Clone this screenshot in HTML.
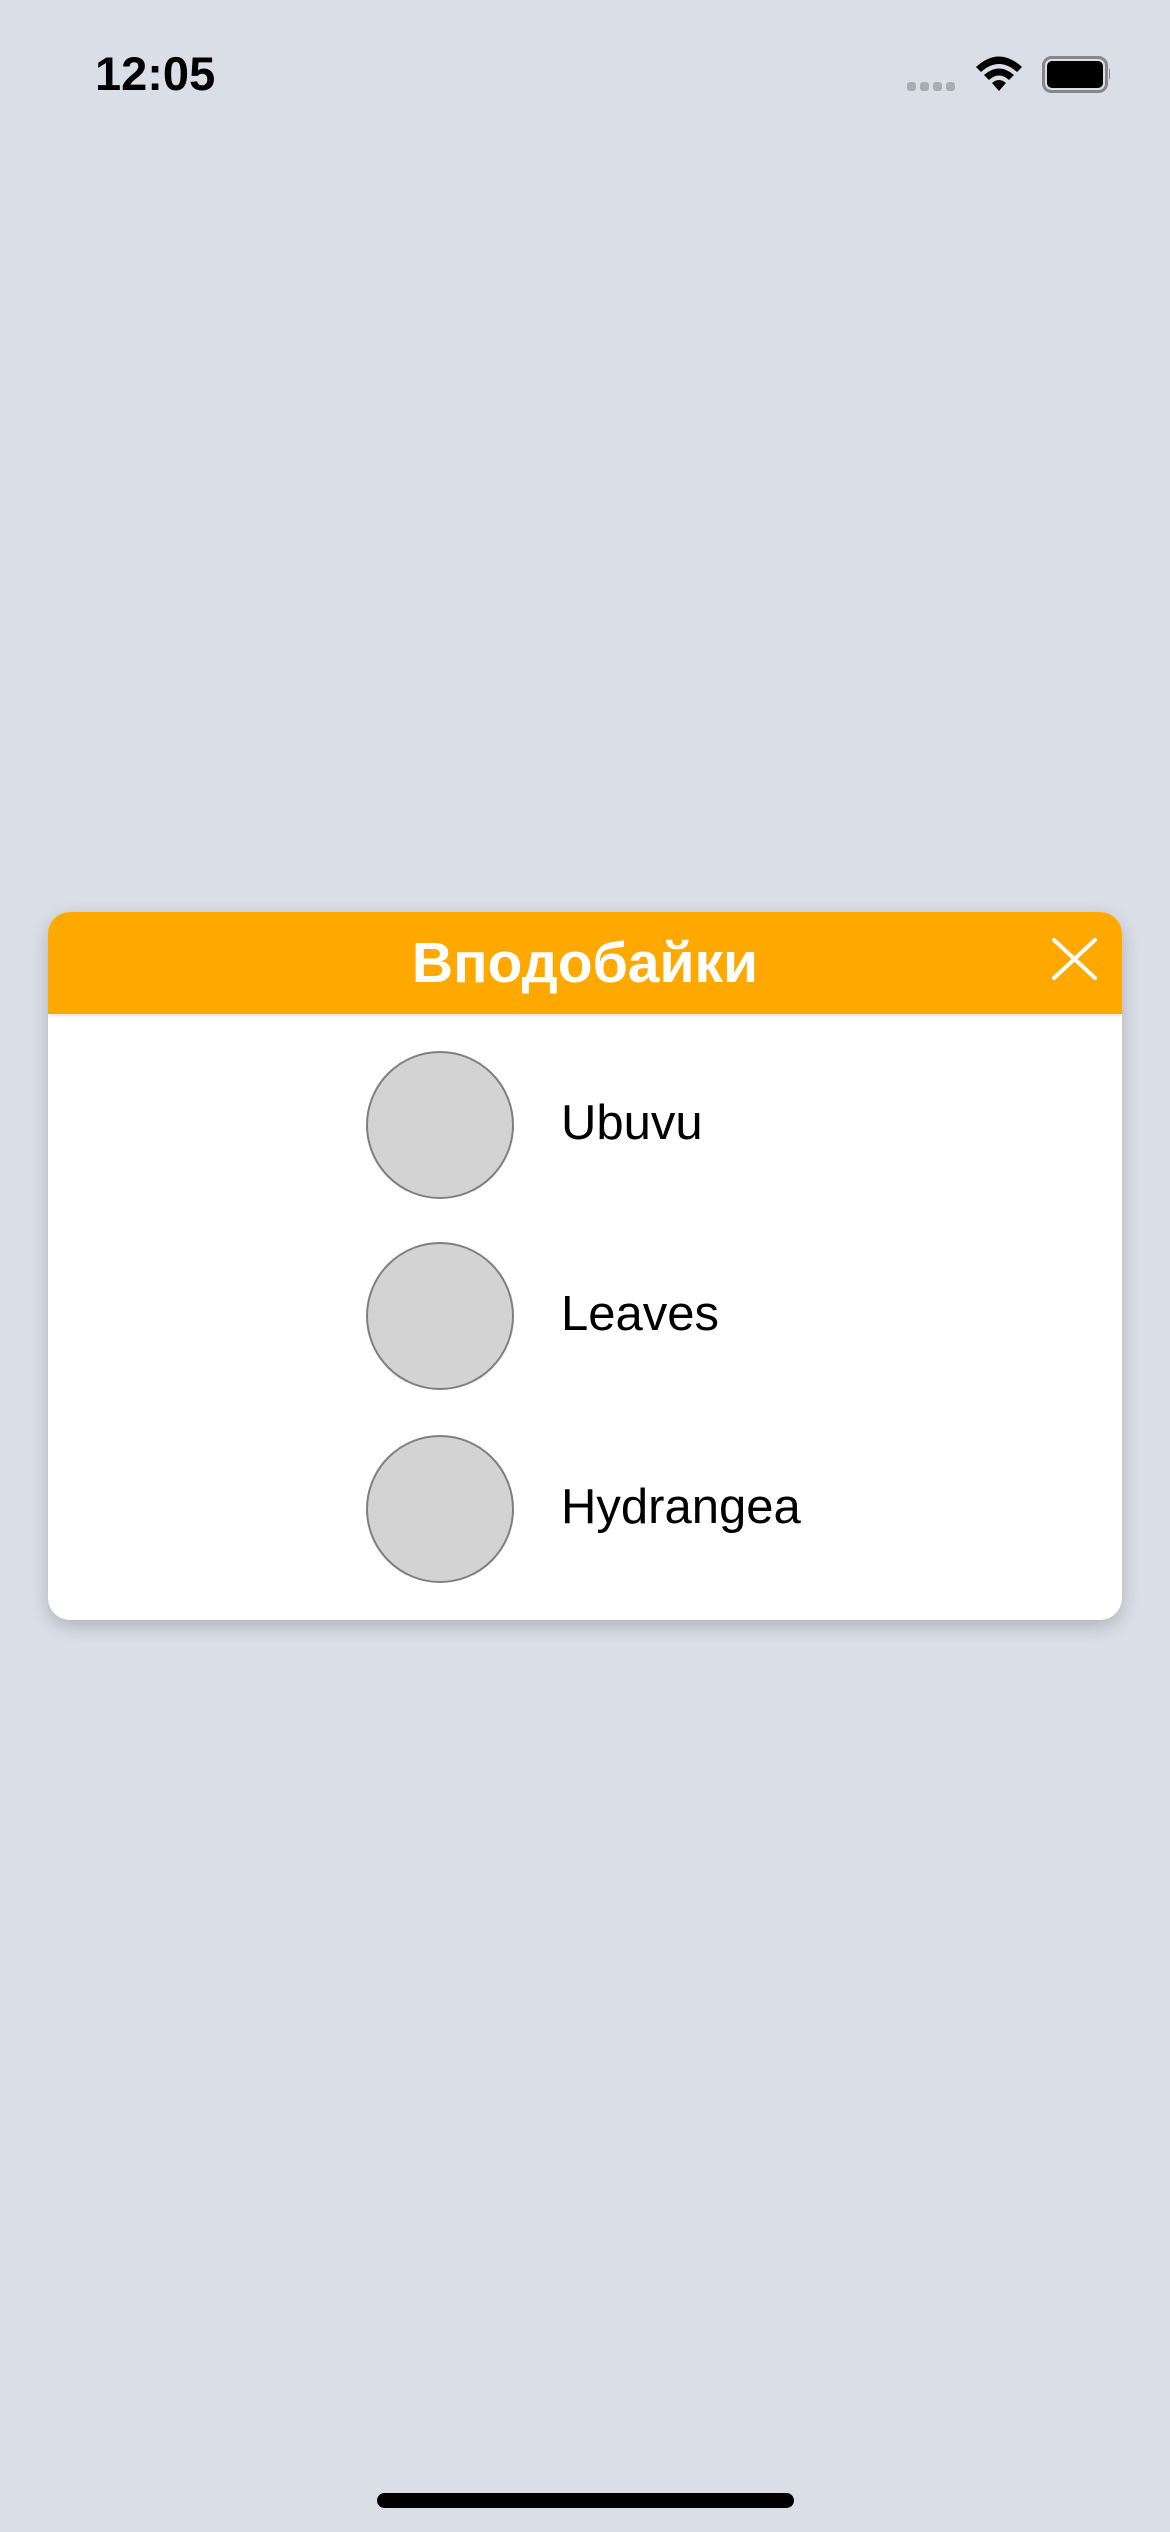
<!DOCTYPE html>
<html><head><meta charset="utf-8"><style>
html,body{margin:0;padding:0}
body{width:1170px;height:2532px;background:#dadee7;position:relative;overflow:hidden;font-family:"Liberation Sans",sans-serif}
.time{position:absolute;left:95px;top:46px;font-size:47px;font-weight:bold;letter-spacing:0px;color:#000}
.card{position:absolute;left:48px;top:912px;width:1074px;height:708px;background:#fff;border-radius:22px;box-shadow:0 6px 18px rgba(0,0,0,0.2);overflow:hidden}
.hdr{height:102px;background:#ffa800;position:relative;box-shadow:0 2px 3px rgba(0,0,0,0.12)}
.title{position:absolute;left:0;right:0;top:18px;text-align:center;color:#fff;font-weight:bold;font-size:57px}
.row{position:absolute;left:318px;width:700px;height:148px}
.c{position:absolute;left:0;top:0;width:144px;height:144px;border-radius:50%;background:#d3d3d3;border:2px solid #7f7f7f}
.t{position:absolute;left:195px;top:44px;font-size:49px;color:#000}
.bar{position:absolute;left:377px;top:2493px;width:417px;height:15px;border-radius:8px;background:#000}
</style></head><body>
<div class="time">12:05</div>
<svg style="position:absolute;left:900px;top:50px" width="210" height="50" viewBox="900 50 210 50">
<g fill="#a9acb3"><rect x="907" y="82" width="9" height="9" rx="3"/><rect x="920" y="82" width="9" height="9" rx="3"/><rect x="933" y="82" width="9" height="9" rx="3"/><rect x="946" y="82" width="9" height="9" rx="3"/></g>
<path d="M976 67 Q999 46 1022 67 L1017 72 Q999 56 981 72 Z" fill="#000"/>
<path d="M984 75 Q999 62 1014 75 L1009 80 Q999 71 989 80 Z" fill="#000"/>
<path d="M992 83 Q999 77 1006 83 L999 91 Z" fill="#000"/>
<rect x="1043.5" y="57.5" width="63" height="34" rx="8" fill="none" stroke="#85878c" stroke-width="3"/>
<rect x="1047" y="61" width="56" height="27" rx="5" fill="#000"/>
<path d="M1109 68 q4 6 0 12 z" fill="#85878c"/>
</svg>
<div class="card">
<div class="hdr"><div class="title">Вподобайки</div>
<svg style="position:absolute;left:1004px;top:26px" width="45" height="42"><path d="M2 2 L43 40 M43 2 L2 40" stroke="#fff" stroke-width="4" stroke-linecap="round"/></svg>
</div>
<div class="row" style="top:139px"><div class="c"></div><div class="t">Ubuvu</div></div>
<div class="row" style="top:330px"><div class="c"></div><div class="t">Leaves</div></div>
<div class="row" style="top:523px"><div class="c"></div><div class="t">Hydrangea</div></div>
</div>
<div class="bar"></div>
</body></html>
